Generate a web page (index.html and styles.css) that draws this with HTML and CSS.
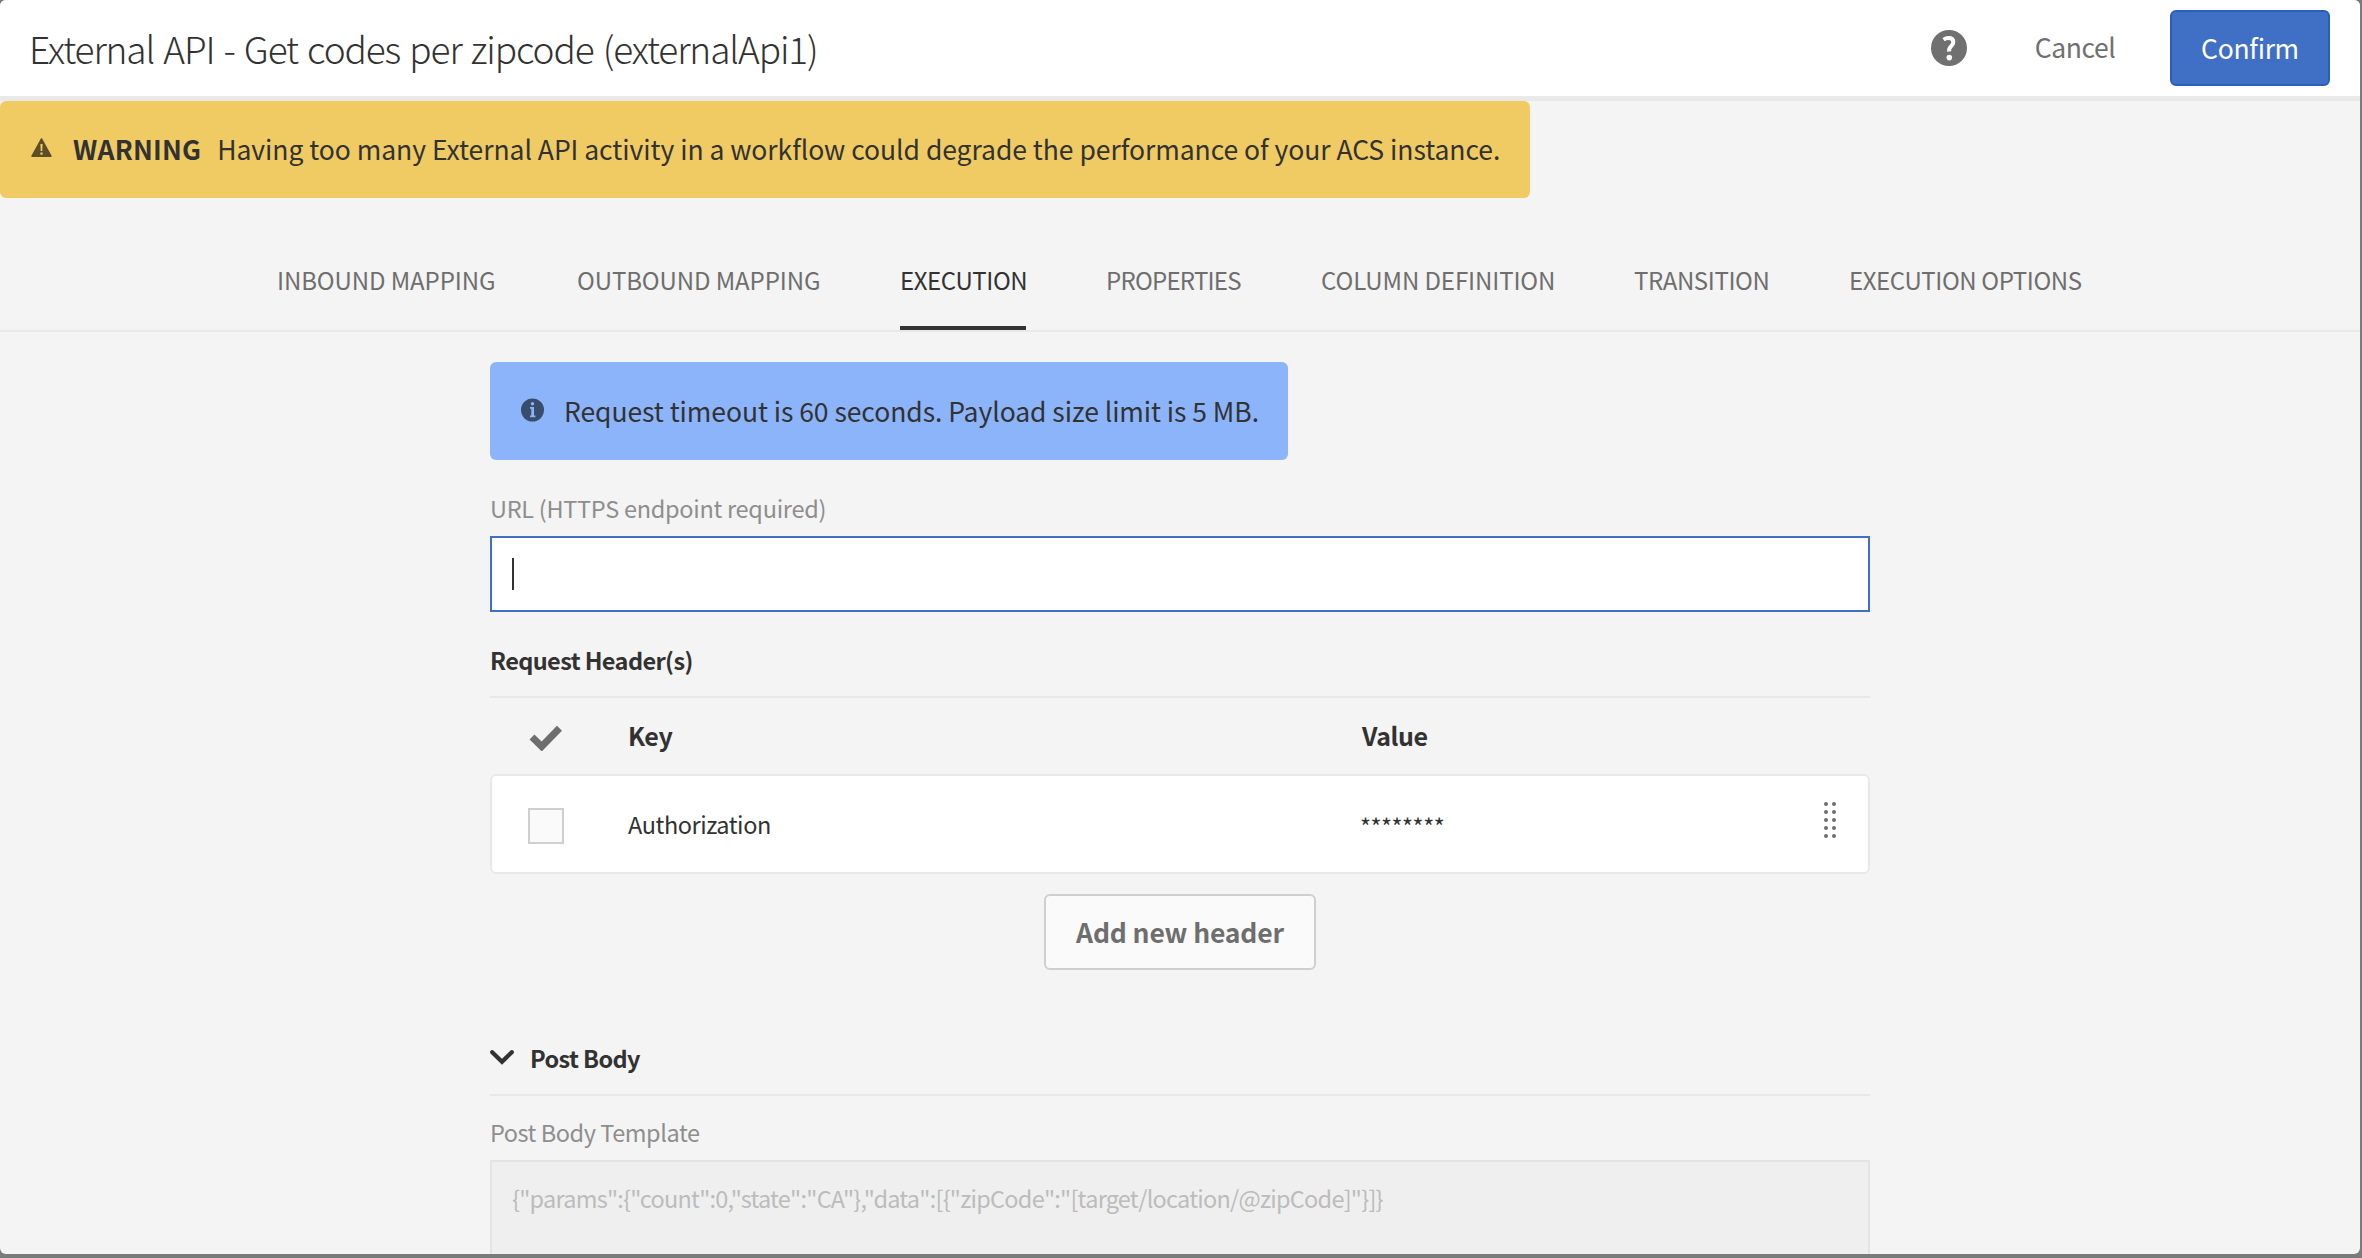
FILE: index.html
```html
<!DOCTYPE html>
<html lang="en">
<head>
<meta charset="utf-8">
<title>External API</title>
<link rel="stylesheet" href="styles.css">
</head>
<body>
<div class="dialog">
  <header class="header">
    <h1 class="title">External API - Get codes per zipcode (externalApi1)</h1>
    <svg class="help" viewBox="0 0 36 36" width="36" height="36">
      <circle cx="18" cy="18" r="18" fill="#707070"/>
      <path d="M12.500 9.600c1.700-1.100 3.400-1.500 5.100-1.500 3 0 4.700 1.500 4.700 3.900 0 2.100-1 3.100-2.300 4.400-1.500 1.500-2.200 2.400-1.900 5" fill="none" stroke="#fff" stroke-width="4"/>
      <circle cx="18.300" cy="27.600" r="2.800" fill="#fff"/>
    </svg>
    <button class="btn-cancel">Cancel</button>
    <button class="btn-confirm">Confirm</button>
  </header>

  <div class="alert warning">
    <svg class="warning-icon" viewBox="0 0 21 19" width="21" height="19">
      <path d="M10.500.8 20 18.200H1z" fill="#5c4e27" stroke="#5c4e27" stroke-width="1.400" stroke-linejoin="round"/>
      <path d="M9.400 6h2.200l-.3 7H9.700z" fill="#f0cb63"/>
      <rect x="9.400" y="14.500" width="2.200" height="2.200" fill="#f0cb63"/>
    </svg>
    <strong class="warning-label">WARNING</strong>
    <span class="warning-text">Having too many External API activity in a workflow could degrade the performance of your ACS instance.</span>
  </div>

  <nav class="tabs">
    <a class="tab">INBOUND MAPPING</a>
    <a class="tab">OUTBOUND MAPPING</a>
    <a class="tab tight active">EXECUTION</a>
    <a class="tab tighter">PROPERTIES</a>
    <a class="tab">COLUMN DEFINITION</a>
    <a class="tab tight">TRANSITION</a>
    <a class="tab tight">EXECUTION OPTIONS</a>
  </nav>

  <main class="content">
    <div class="alert info">
      <svg class="info-icon" viewBox="0 0 24 24" width="24" height="24">
        <circle cx="12.500" cy="12" r="11.500" fill="#384d6b"/>
        <circle cx="12.500" cy="5.700" r="1.700" fill="#8cb4fb"/>
        <path d="M10 9h4v8.500h1.500v1.700H10v-1.700h1.300v-6.800H10z" fill="#8cb4fb"/>
      </svg>
      <span>Request timeout is 60 seconds. Payload size limit is 5 MB.</span>
    </div>

    <label class="label url-label">URL (HTTPS endpoint required)</label>
    <div class="input"><span class="caret"></span></div>

    <h2 class="section">Request Header(s)</h2>
    <div class="row head">
      <svg class="check" viewBox="0 0 34 26" width="34" height="26">
        <path d="M3 12 12.700 21.500 30.500 3.300" fill="none" stroke="#6e6e6e" stroke-width="7"/>
      </svg>
      <span>Key</span>
      <span>Value</span>
    </div>
    <div class="row item">
      <span class="checkbox"></span>
      <span>Authorization</span>
      <span class="secret">********</span>
      <svg class="handle" viewBox="0 0 12 36" width="12" height="36" fill="#6e6e6e">
        <circle cx="2" cy="2" r="2"/><circle cx="10" cy="2" r="2"/>
        <circle cx="2" cy="10" r="2"/><circle cx="10" cy="10" r="2"/>
        <circle cx="2" cy="18" r="2"/><circle cx="10" cy="18" r="2"/>
        <circle cx="2" cy="26" r="2"/><circle cx="10" cy="26" r="2"/>
        <circle cx="2" cy="34" r="2"/><circle cx="10" cy="34" r="2"/>
      </svg>
    </div>
    <button class="btn-add">Add new header</button>

    <h2 class="section collapsible">
      <svg viewBox="0 0 24 15" width="24" height="15">
        <path d="M2.200 2.200 12 11.800 21.800 2.200" fill="none" stroke="#323232" stroke-width="4.200" stroke-linecap="round"/>
      </svg>
      <span>Post Body</span>
    </h2>
    <label class="label body-label">Post Body Template</label>
    <div class="textarea">{"params":{"count":0,"state":"CA"},"data":[{"zipCode":"[target/location/@zipCode]"}]}</div>
  </main>
</div>
</body>
</html>
```
FILE: styles.css
```css
* { box-sizing: border-box; }

body {
  margin: 0;
  height: 1258px;
  overflow: hidden;
  background: #7a7c7b;
  color: #323232;
  font: 400 23.5px "Noto Sans CJK SC", "Open Sans", sans-serif;
}

svg { display: block; flex: none; }

.dialog {
  width: 2360px;
  height: 1254px;
  overflow: hidden;
  border-radius: 6px;
  background: #f4f4f4;
}

.header {
  display: flex;
  align-items: center;
  height: 101px;
  padding: 0 30px 0 29px;
  border-bottom: 5px solid #e9e9e9;
  background: #fff;
}

.title {
  flex: 1;
  margin: 0;
  font-size: 37px;
  font-weight: 300;
  letter-spacing: -1.1px;
  word-spacing: 2px;
  line-height: 60px;
}

button {
  font: 400 26.5px/72px "Noto Sans CJK SC", "Open Sans", sans-serif;
  padding: 0;
  height: 76px;
}

.btn-cancel {
  width: 160px;
  margin: 0 15px 0 28px;
  border: 0;
  background: none;
  color: #707070;
  letter-spacing: -0.4px;
  padding-bottom: 2px;
}

.btn-confirm {
  width: 160px;
  border: 2px solid #2b5dbd;
  border-radius: 6px;
  background: #4070c6;
  color: #fff;
  letter-spacing: -0.3px;
  padding-bottom: 3px;
}

.alert {
  display: flex;
  border-radius: 6px;
  font-size: 26.5px;
  white-space: nowrap;
}

.warning {
  width: 1530px;
  height: 97px;
  padding-left: 31px;
  background: #f0cb63;
  line-height: 95px;
}

.warning-icon { margin-top: 37px; }
.warning-label { margin-left: 21px; letter-spacing: 0.2px; }
.warning-text { margin-left: 16px; letter-spacing: -0.04px; }

.tabs {
  display: grid;
  grid-template-columns: 220px 243px 126px 135px 233px 135px 236px;
  gap: 80px;
  height: 134px;
  padding-left: 277px;
  border-bottom: 2px solid #e8e8e8;
  color: #6e6e6e;
  font-size: 24px;
  line-height: 163px;
}

.tab { height: 132px; white-space: nowrap; letter-spacing: -0.1px; }
.tight { letter-spacing: -0.4px; }
.tighter { letter-spacing: -0.75px; }

.active {
  color: #323232;
  border-bottom: 4px solid #323232;
}

.content {
  display: flex;
  flex-direction: column;
  width: 1380px;
  margin-left: 490px;
  padding-top: 30px;
}

.info {
  width: 798px;
  height: 98px;
  padding-left: 30px;
  background: #8cb4fb;
  letter-spacing: -0.06px;
  line-height: 98px;
}

.info-icon { margin: 36px 20px 0 0; }

.label { color: #8e8e8e; letter-spacing: -0.28px; }

.url-label { height: 51px; margin-top: 25px; line-height: 46px; }

.input {
  height: 76px;
  padding: 20px;
  border: 2px solid #4070c6;
  background: #fff;
}

.caret { display: block; width: 2px; height: 32px; background: #323232; }

.section {
  height: 58px;
  margin: 28px 0 0;
  border-bottom: 2px solid #e8e8e8;
  font-size: 23.5px;
  font-weight: 700;
  letter-spacing: -0.6px;
  line-height: 40px;
}

.row {
  display: grid;
  align-items: center;
}

.head {
  grid-template-columns: 100px 734px 460px;
  height: 76px;
  padding: 0 0 2px 38px;
  font-size: 25px;
  font-weight: 700;
  letter-spacing: -0.4px;
}

.check { margin: 6px 0 0 1px; }

.item {
  grid-template-columns: 100px 732px 464px 12px;
  height: 100px;
  padding-left: 36px;
  border: 2px solid #e8e8e8;
  border-radius: 6px;
  background: #fff;
  letter-spacing: -0.45px;
}

.secret { padding-top: 4px; }

.checkbox {
  width: 36px;
  height: 36px;
  margin-top: 4px;
  border: 2px solid #cfcfcf;
  background: #fafafa;
}

.handle { margin-top: -8px; }

.btn-add {
  align-self: center;
  width: 272px;
  margin-top: 20px;
  padding-bottom: 4px;
  border: 2px solid #cfcfcf;
  border-radius: 6px;
  background: #fafafa;
  color: #6e6e6e;
  font-weight: 700;
  letter-spacing: -0.15px;
}

.collapsible {
  display: flex;
  gap: 16px;
  height: 62px;
  margin-top: 64px;
  line-height: 48px;
}

.collapsible svg { margin-top: 16px; }

.body-label {
  height: 64px;
  padding-top: 12px;
  letter-spacing: -0.45px;
  line-height: 48px;
}

.textarea {
  height: 160px;
  padding: 21px 20px;
  border: 2px solid #e4e4e4;
  background: #efefef;
  color: #bcbcbc;
  letter-spacing: -0.76px;
  line-height: 30px;
  white-space: nowrap;
}
```
